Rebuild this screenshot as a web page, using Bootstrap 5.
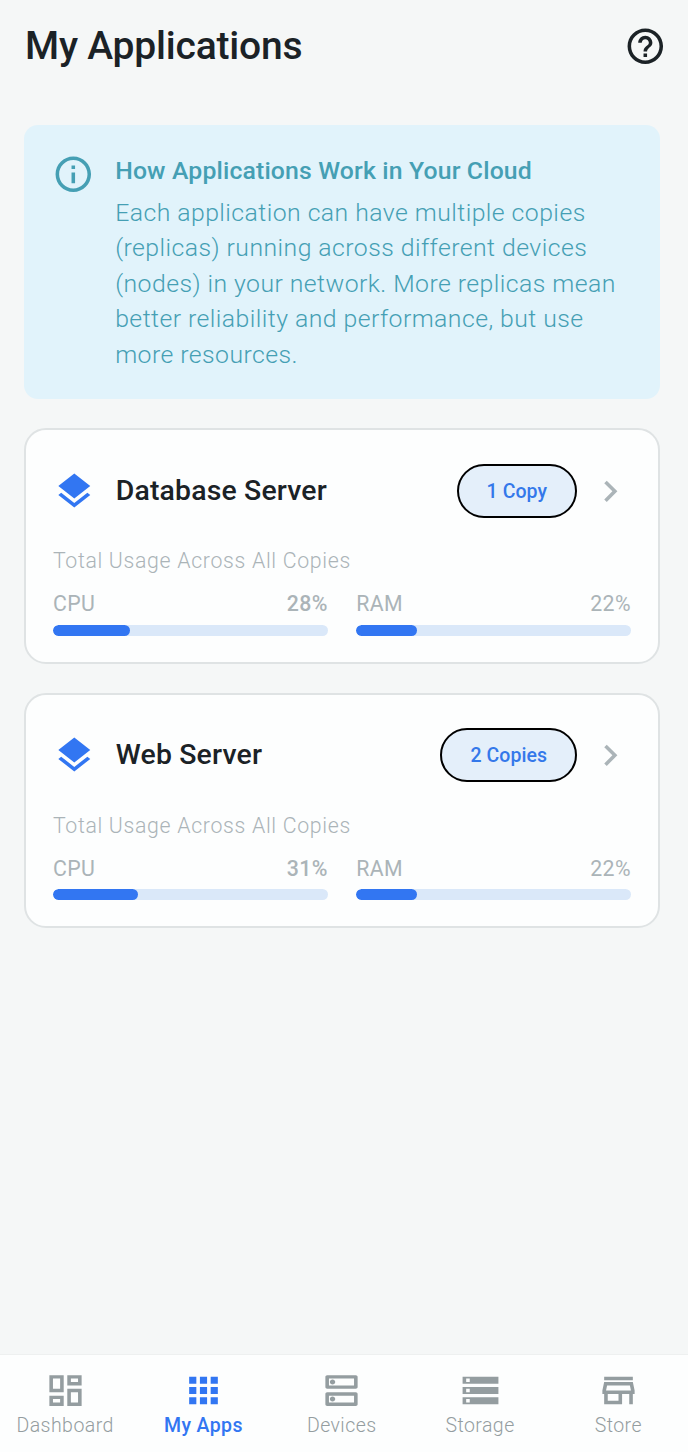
<!DOCTYPE html>
<html lang="en">
<head>
<meta charset="utf-8">
<meta name="viewport" content="width=device-width, initial-scale=1">
<title>My Applications</title>
<link href="https://cdn.jsdelivr.net/npm/bootstrap@5.3.0/dist/css/bootstrap.min.css" rel="stylesheet">
<style>
  body { font-family: Roboto, "Liberation Sans", sans-serif; background: #f5f7f7; color: #1b2226; height: 1452px; overflow: hidden; }
  svg { display: block; fill: currentColor; flex: none; }
  .ico { width: 42.6px; height: 42.6px; }
  .app-head { height: 93px; padding: 0 21px 0 25px; }
  .app-title { font-size: 39px; font-weight: 500; line-height: 46px; letter-spacing: -.2px; margin-top: -2px; }
  .app-main { padding: 32px 28.5px 0 24.4px; }
  .info-box { background: #e1f3fb; color: #459fb4; border-radius: 14px; height: 274px; padding: 28px 28px 0 27.6px; gap: 20.6px; }
  .info-title { font-size: 24.8px; font-weight: 500; line-height: 36px; letter-spacing: .14px; }
  .info-text { font-size: 24.8px; font-weight: 300; line-height: 35.5px; letter-spacing: .44px; margin-top: 5.5px; white-space: nowrap; }
  .card-stack { gap: 29px; margin-top: 29px; }
  .app-card { background: #fdfefe; border: 2px solid #dfe3e4; border-radius: 22px; height: 236px; padding: 34px 26.5px 0; }
  .app-card + .app-card { height: 235px; padding-top: 33.2px; }
  .app-name { font-size: 28.4px; font-weight: 500; letter-spacing: .17px; line-height: 36px; margin-left: 20.3px; margin-top: -1px; }
  .app-icon { color: #3276f2; }
  .copies { border: 2px solid #000; border-radius: 27px; background: #e4effa; color: #3478ea; font-size: 19.5px; font-weight: 500; letter-spacing: .06px; height: 54px; padding: 1px 27.5px 0 28px; margin-right: 12.4px; }
  .chev { margin-right: -.6px; }
  .chev, .meter-text { color: #abb4b8; }
  .usage { color: #abb4b8; font-size: 21.3px; font-weight: 300; letter-spacing: .68px; line-height: 28px; margin-top: 29px; }
  .app-card + .app-card .usage { margin-top: 30px; }
  .meters { gap: 28.4px; margin-top: 15px; }
  .meter-text { font-size: 21.3px; line-height: 28px; letter-spacing: .4px; }
  .meter-val { font-weight: 500; }
  .progress { height: 11px; border-radius: 6px; background: #dae8f9; margin-top: 7px; }
  .app-card + .app-card .progress { margin-top: 6px; }
  .progress-bar { background: #3276f2; border-radius: 6px; }
  .tabs { background: #fdfefe; border-top: 1px solid #eef0f0; height: 98px; padding-top: 15px; margin-left: -4px; color: #949da0; }
  .tabs svg { width: 43px; height: 41px; margin-bottom: 3px; }
  .tab { width: 138.3px; font-size: 19.5px; font-weight: 300; line-height: 24px; letter-spacing: .45px; color: inherit; text-decoration: none; }
  .tab.on { color: #3276f2; font-weight: 500; letter-spacing: .4px; }
</style>
</head>
<body class="d-flex flex-column">
<header class="app-head d-flex align-items-center justify-content-between">
  <h1 class="app-title mb-0">My Applications</h1>
  <svg class="ico" viewBox="0 0 24 24"><path d="M11 18h2v-2h-2v2zm1-16C6.48 2 2 6.48 2 12s4.480 10 10 10 10-4.480 10-10S17.520 2 12 2zm0 18c-4.410 0-8-3.590-8-8s3.590-8 8-8 8 3.590 8 8-3.590 8-8 8zm0-14c-2.210 0-4 1.790-4 4h2c0-1.100.9-2 2-2s2 .9 2 2c0 2-3 1.750-3 5h2c0-2.250 3-2.500 3-5 0-2.210-1.790-4-4-4z"/></svg>
</header>
<main class="app-main flex-grow-1">
  <section class="info-box d-flex">
    <svg class="ico" viewBox="0 0 24 24"><path d="M11 7h2v2h-2zm0 4h2v6h-2zm1-9C6.480 2 2 6.480 2 12s4.480 10 10 10 10-4.480 10-10S17.520 2 12 2zm0 18c-4.410 0-8-3.590-8-8s3.590-8 8-8 8 3.590 8 8-3.590 8-8 8z"/></svg>
    <div>
      <h2 class="info-title mb-0">How Applications Work in Your Cloud</h2>
      <p class="info-text mb-0">Each application can have multiple copies<br>(replicas) running across different devices<br>(nodes) in your network. More replicas mean<br>better reliability and performance, but use<br>more resources.</p>
    </div>
  </section>
  <div class="card-stack d-flex flex-column">
    <article class="app-card">
      <div class="d-flex align-items-center">
        <svg class="ico app-icon" viewBox="0 0 24 24"><path d="M11.990 18.540l-7.370-5.730L3 14.070l9 7 9-7-1.630-1.270-7.380 5.740zM12 16l7.360-5.730L21 9l-9-7-9 7 1.630 1.270L12 16z"/></svg>
        <h3 class="app-name mb-0 me-auto">Database Server</h3>
        <span class="copies d-flex align-items-center">1 Copy</span>
        <svg class="ico chev" viewBox="0 0 24 24"><path d="M10 6L8.590 7.410 13.170 12l-4.580 4.590L10 18l6-6z"/></svg>
      </div>
      <div class="usage">Total Usage Across All Copies</div>
      <div class="meters d-flex">
        <div class="flex-fill w-50">
          <div class="meter-text d-flex justify-content-between"><span>CPU</span><span class="meter-val">28%</span></div>
          <div class="progress"><div class="progress-bar" style="width:28%"></div></div>
        </div>
        <div class="flex-fill w-50">
          <div class="meter-text d-flex justify-content-between"><span>RAM</span><span>22%</span></div>
          <div class="progress"><div class="progress-bar" style="width:22%"></div></div>
        </div>
      </div>
    </article>
    <article class="app-card">
      <div class="d-flex align-items-center">
        <svg class="ico app-icon" viewBox="0 0 24 24"><path d="M11.990 18.540l-7.370-5.730L3 14.070l9 7 9-7-1.630-1.270-7.380 5.740zM12 16l7.360-5.730L21 9l-9-7-9 7 1.630 1.270L12 16z"/></svg>
        <h3 class="app-name mb-0 me-auto">Web Server</h3>
        <span class="copies d-flex align-items-center">2 Copies</span>
        <svg class="ico chev" viewBox="0 0 24 24"><path d="M10 6L8.590 7.410 13.170 12l-4.580 4.590L10 18l6-6z"/></svg>
      </div>
      <div class="usage">Total Usage Across All Copies</div>
      <div class="meters d-flex">
        <div class="flex-fill w-50">
          <div class="meter-text d-flex justify-content-between"><span>CPU</span><span class="meter-val">31%</span></div>
          <div class="progress"><div class="progress-bar" style="width:31%"></div></div>
        </div>
        <div class="flex-fill w-50">
          <div class="meter-text d-flex justify-content-between"><span>RAM</span><span>22%</span></div>
          <div class="progress"><div class="progress-bar" style="width:22%"></div></div>
        </div>
      </div>
    </article>
  </div>
</main>
<nav class="tabs d-flex">
  <a class="tab d-flex flex-column align-items-center"><svg viewBox="0 0 24 24" preserveAspectRatio="none"><path d="M19 5v2h-4V5h4M9 5v6H5V5h4m10 8v6h-4v-6h4M9 17v2H5v-2h4M21 3h-8v6h8V3zM11 3H3v10h8V3zm10 8h-8v10h8V11zm-10 4H3v6h8v-6z"/></svg>Dashboard</a>
  <a class="tab on d-flex flex-column align-items-center"><svg viewBox="0 0 24 24" preserveAspectRatio="none"><path d="M4 8h4V4H4v4zm6 12h4v-4h-4v4zm-6 0h4v-4H4v4zm0-6h4v-4H4v4zm6 0h4v-4h-4v4zm6-10v4h4V4h-4zm-6 4h4V4h-4v4zm6 6h4v-4h-4v4zm0 6h4v-4h-4v4z"/></svg>My Apps</a>
  <a class="tab d-flex flex-column align-items-center"><svg viewBox="0 0 24 24" preserveAspectRatio="none"><path d="M19 15v4H5v-4h14m1-2H4c-.55 0-1 .45-1 1v6c0 .55.45 1 1 1h16c.55 0 1-.45 1-1v-6c0-.55-.45-1-1-1zM7 18.500c-.82 0-1.500-.67-1.500-1.500s.68-1.500 1.500-1.500 1.500.67 1.500 1.500-.67 1.500-1.500 1.500zM19 5v4H5V5h14m1-2H4c-.55 0-1 .45-1 1v6c0 .55.45 1 1 1h16c.55 0 1-.45 1-1V4c0-.55-.45-1-1-1zM7 8.500c-.82 0-1.500-.67-1.500-1.500S6.180 5.500 7 5.500s1.500.68 1.500 1.500S7.830 8.500 7 8.500z"/></svg>Devices</a>
  <a class="tab d-flex flex-column align-items-center"><svg viewBox="0 0 24 24" preserveAspectRatio="none"><path d="M2 20h20v-4H2v4zm2-3h2v2H4v-2zM2 4v4h20V4H2zm4 3H4V5h2v2zm-4 7h20v-4H2v4zm2-3h2v2H4v-2z"/></svg>Storage</a>
  <a class="tab d-flex flex-column align-items-center"><svg viewBox="0 0 24 24" preserveAspectRatio="none"><path d="M18.360 9l.6 3H5.040l.6-3h12.720M20 4H4v2h16V4zm0 3H4l-1 5v2h1v6h10v-6h4v6h2v-6h1v-2l-1-5zM6 18v-4h6v4H6z"/></svg>Store</a>
</nav>
<script src="https://cdn.jsdelivr.net/npm/bootstrap@5.3.0/dist/js/bootstrap.bundle.min.js"></script>
</body>
</html>
